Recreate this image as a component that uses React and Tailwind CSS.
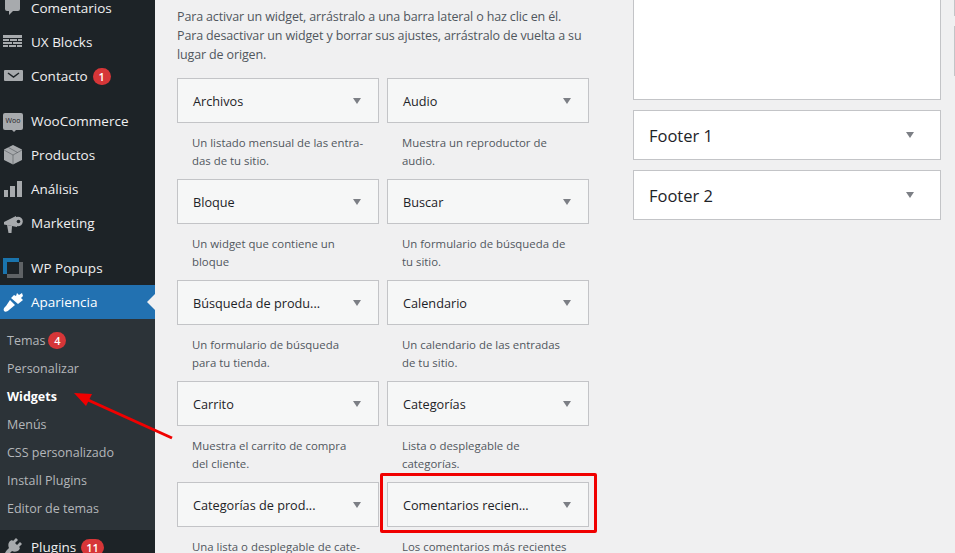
const F = { fontFamily: '"Open Sans","Noto Sans",sans-serif' };
const DARK = "#1d2327";

const I = {
  comment: <path d="M4 -3h11a2 2 0 0 1 2 2v12a2 2 0 0 1-2 2h-5l-4 4v-4H4a2 2 0 0 1-2-2V-1a2 2 0 0 1 2-2z" />,
  ux: <path d="M0 3h19v3H0zM0 7h6v2H0zM7 7h7v2H7zM15 7h4v2h-4zM0 10h9v2H0zM10 10h9v2h-9zM0 13h5v2H0zM6 13h7v2H6zM14 13h5v2h-5z" />,
  mail: (
    <>
      <rect x="1" y="4" width="19" height="11" rx="1" />
      <path d="M5 7l5.500 4L16 7" fill="none" stroke={DARK} strokeWidth="1.500" />
    </>
  ),
  box: (
    <>
      <path d="M10 0l9 4.500V15l-9 4.500L1 15V4.500z" />
      <path d="M1 5l9 5 9-5M5.500 2.500l9 5M10 10v9" fill="none" stroke={DARK} strokeWidth="0.600" opacity="0.600" />
    </>
  ),
  bars: <path d="M1 11h4v7H1zM7 7h5v11H7zM14 2h5v16h-5z" />,
  mega: (
    <>
      <path d="M1 9l12-6 1 11-13-2.500z" />
      <path d="M4 12l5 1-.500 7H5.500z" />
      <circle cx="15" cy="8.500" r="4.800" />
      <circle cx="15.500" cy="8.500" r="1.800" fill={DARK} />
    </>
  ),
  brush: (
    <>
      <path d="M8 6l3-3 2 1 1-3 2 2 3-2 1 3-2 2 2 2-5 4z" />
      <path d="M7 8l5 5-6 5c-2 2-4 2-5 1-1-2 0-3 2-5z" />
    </>
  ),
  plug: <path d="M13 1l2 2-3 3 2 2 3-3 2 2-3 3 1 1-1 2c-2 2-5 2-7 1l-2 2c-1 1-3 2-5 3l-1-1c1-2 2-4 3-5l2-2c-1-2-1-5 1-7l2-1 1 1z" />,
};

function Icon({ name, active }) {
  if (name === "woo")
    return (
      <span className="relative w-[20px] h-[17px] rounded-[2px] bg-[#a7aaad] flex items-center justify-center text-[7px] text-[#1d2327]" style={F}>
        Woo
        <span className="absolute left-[9px] -bottom-[2px] w-0 h-0 border-x-[2px] border-x-transparent border-t-[2px] border-t-[#a7aaad]"></span>
      </span>
    );
  if (name === "popup")
    return (
      <svg viewBox="0 0 20 20" width="20" height="20">
        <path d="M0 0h16v4H4v12H0z" fill="#1a74ad" />
        <path d="M16 4h4v16H4v-4h12z" fill="#5f6366" />
      </svg>
    );
  return (
    <svg viewBox="0 0 20 20" width="20" height="20" fill={active ? "#ffffff" : "#a7aaad"} className="overflow-visible">{I[name]}</svg>
  );
}

function Badge({ n, ml }) {
  return (
    <span className={`${ml} inline-flex h-[17px] min-w-[18px] px-[5px] items-center justify-center rounded-full bg-[#d63638] text-white text-[11px] font-semibold leading-none`}>{n}</span>
  );
}

function Menu({ icon, label, badge, active, mb }) {
  return (
    <div className={`relative h-[34px] flex items-center pl-[3px] text-[13.5px] ${active ? "bg-[#2271b1] text-white" : "text-[#f0f0f1]"} ${mb ? "mb-[11px]" : ""}`}>
      <span className="w-[28px] flex justify-start"><Icon name={icon} active={active} /></span>
      <span>{label}</span>
      {badge && <Badge n={badge} ml="ml-[5px]" />}
      {active && <span className="absolute right-0 top-[9px] w-0 h-0 border-y-[8px] border-y-transparent border-r-[8px] border-r-[#f0f0f1]"></span>}
    </div>
  );
}

function Sub({ label, badge, current }) {
  return (
    <div className={`h-[28px] flex items-center pl-[7px] text-[12.5px] ${current ? "text-white font-bold" : "text-[#b4b7ba]"}`}>
      <span className="pt-[2px]">{label}</span>{badge && <Badge n={badge} ml="ml-[3px]" />}
    </div>
  );
}

function Caret() {
  return <span className="w-0 h-0 border-x-[4.500px] border-x-transparent border-t-[6px] border-t-[#7c7f85]"></span>;
}

const widgets = [
  ["Archivos", "Un listado mensual de las entra-\ndas de tu sitio."],
  ["Audio", "Muestra un reproductor de\naudio."],
  ["Bloque", "Un widget que contiene un\nbloque"],
  ["Buscar", "Un formulario de búsqueda de\ntu sitio."],
  ["Búsqueda de produ...", "Un formulario de búsqueda\npara tu tienda."],
  ["Calendario", "Un calendario de las entradas\nde tu sitio."],
  ["Carrito", "Muestra el carrito de compra\ndel cliente."],
  ["Categorías", "Lista o desplegable de\ncategorías."],
  ["Categorías de prod...", "Una lista o desplegable de cate-\ngorías de producto."],
  ["Comentarios recien...", "Los comentarios más recientes\nde tu sitio."],
];

function Widget({ title, desc }) {
  return (
    <div className="h-[101px]">
      <div className="h-[45px] border border-[#c3c4c7] bg-[#f6f7f7] flex items-center justify-between pl-[15px] pr-[17px] text-[12.700px] text-[#1d2327]">
        <span className="font-medium pt-[3px]">{title}</span>
        <Caret />
      </div>
      <p className="pt-[11px] pl-[15px] text-[11.400px] leading-[18px] text-[#50575e] whitespace-pre-line">{desc}</p>
    </div>
  );
}

function Area({ title }) {
  return (
    <div className="h-[50px] border border-[#c3c4c7] bg-white flex items-center justify-between pl-[15px] pr-[26px] text-[16.500px] text-[#1d2327]">
      <span className="font-medium pt-[3px]">{title}</span>
      <Caret />
    </div>
  );
}

export default function App() {
  return (
    <div className="relative w-[955px] h-[553px] overflow-hidden flex bg-[#f0f0f1]" style={F}>
      <aside className="w-[155px] shrink-0 bg-[#1d2327] -mt-[9px] h-[600px]">
        <Menu icon="comment" label="Comentarios" />
        <Menu icon="ux" label="UX Blocks" />
        <Menu icon="mail" label="Contacto" badge="1" mb />
        <Menu icon="woo" label="WooCommerce" />
        <Menu icon="box" label="Productos" />
        <Menu icon="bars" label="Análisis" />
        <Menu icon="mega" label="Marketing" mb />
        <Menu icon="popup" label="WP Popups" />
        <Menu icon="brush" label="Apariencia" active />
        <div className="bg-[#2c3338] py-[7px] h-[211px]">
          <Sub label="Temas" badge="4" />
          <Sub label="Personalizar" />
          <Sub label="Widgets" current />
          <Sub label="Menús" />
          <Sub label="CSS personalizado" />
          <Sub label="Install Plugins" />
          <Sub label="Editor de temas" />
        </div>
        <Menu icon="plug" label="Plugins" badge="11" />
      </aside>

      <main className="flex-1 flex pl-[22px] min-w-0">
        <div className="w-[412px] shrink-0">
          <p className="pt-[7px] text-[12.500px] tracking-[-0.140px] leading-[19px] text-[#50575e] whitespace-pre">{"Para activar un widget, arrástralo a una barra lateral o haz clic en él.\nPara desactivar un widget y borrar sus ajustes, arrástralo de vuelta a su\nlugar de origen."}</p>
          <div className="mt-[14px] grid grid-cols-[202px_202px] gap-x-[8px]">
            {widgets.map(([t, d]) => <Widget key={t} title={t} desc={d} />)}
          </div>
        </div>
        <div className="ml-[44px] w-[308px] shrink-0 flex flex-col gap-[10px]">
          <div className="h-[100px] border border-t-0 border-[#c3c4c7] bg-white"></div>
          <Area title="Footer 1" />
          <Area title="Footer 2" />
        </div>
      </main>

      <div className="absolute right-0 top-0 w-px h-[16px] bg-[#c3c4c7]"></div>
      <div className="absolute right-0 top-[26px] w-px h-[50px] bg-[#c3c4c7]"></div>
      <div className="absolute left-[380px] top-[473px] w-[217px] h-[60px] border-[3px] border-[#f00000] rounded-[2px]"></div>
      <svg className="absolute left-0 top-0 pointer-events-none" width="955" height="553" viewBox="0 0 955 553">
        <path d="M172 438L88 400" stroke="#f00000" strokeWidth="3" fill="none" />
        <path d="M74 393L92 394L86 406z" fill="#f00000" />
      </svg>
    </div>
  );
}
